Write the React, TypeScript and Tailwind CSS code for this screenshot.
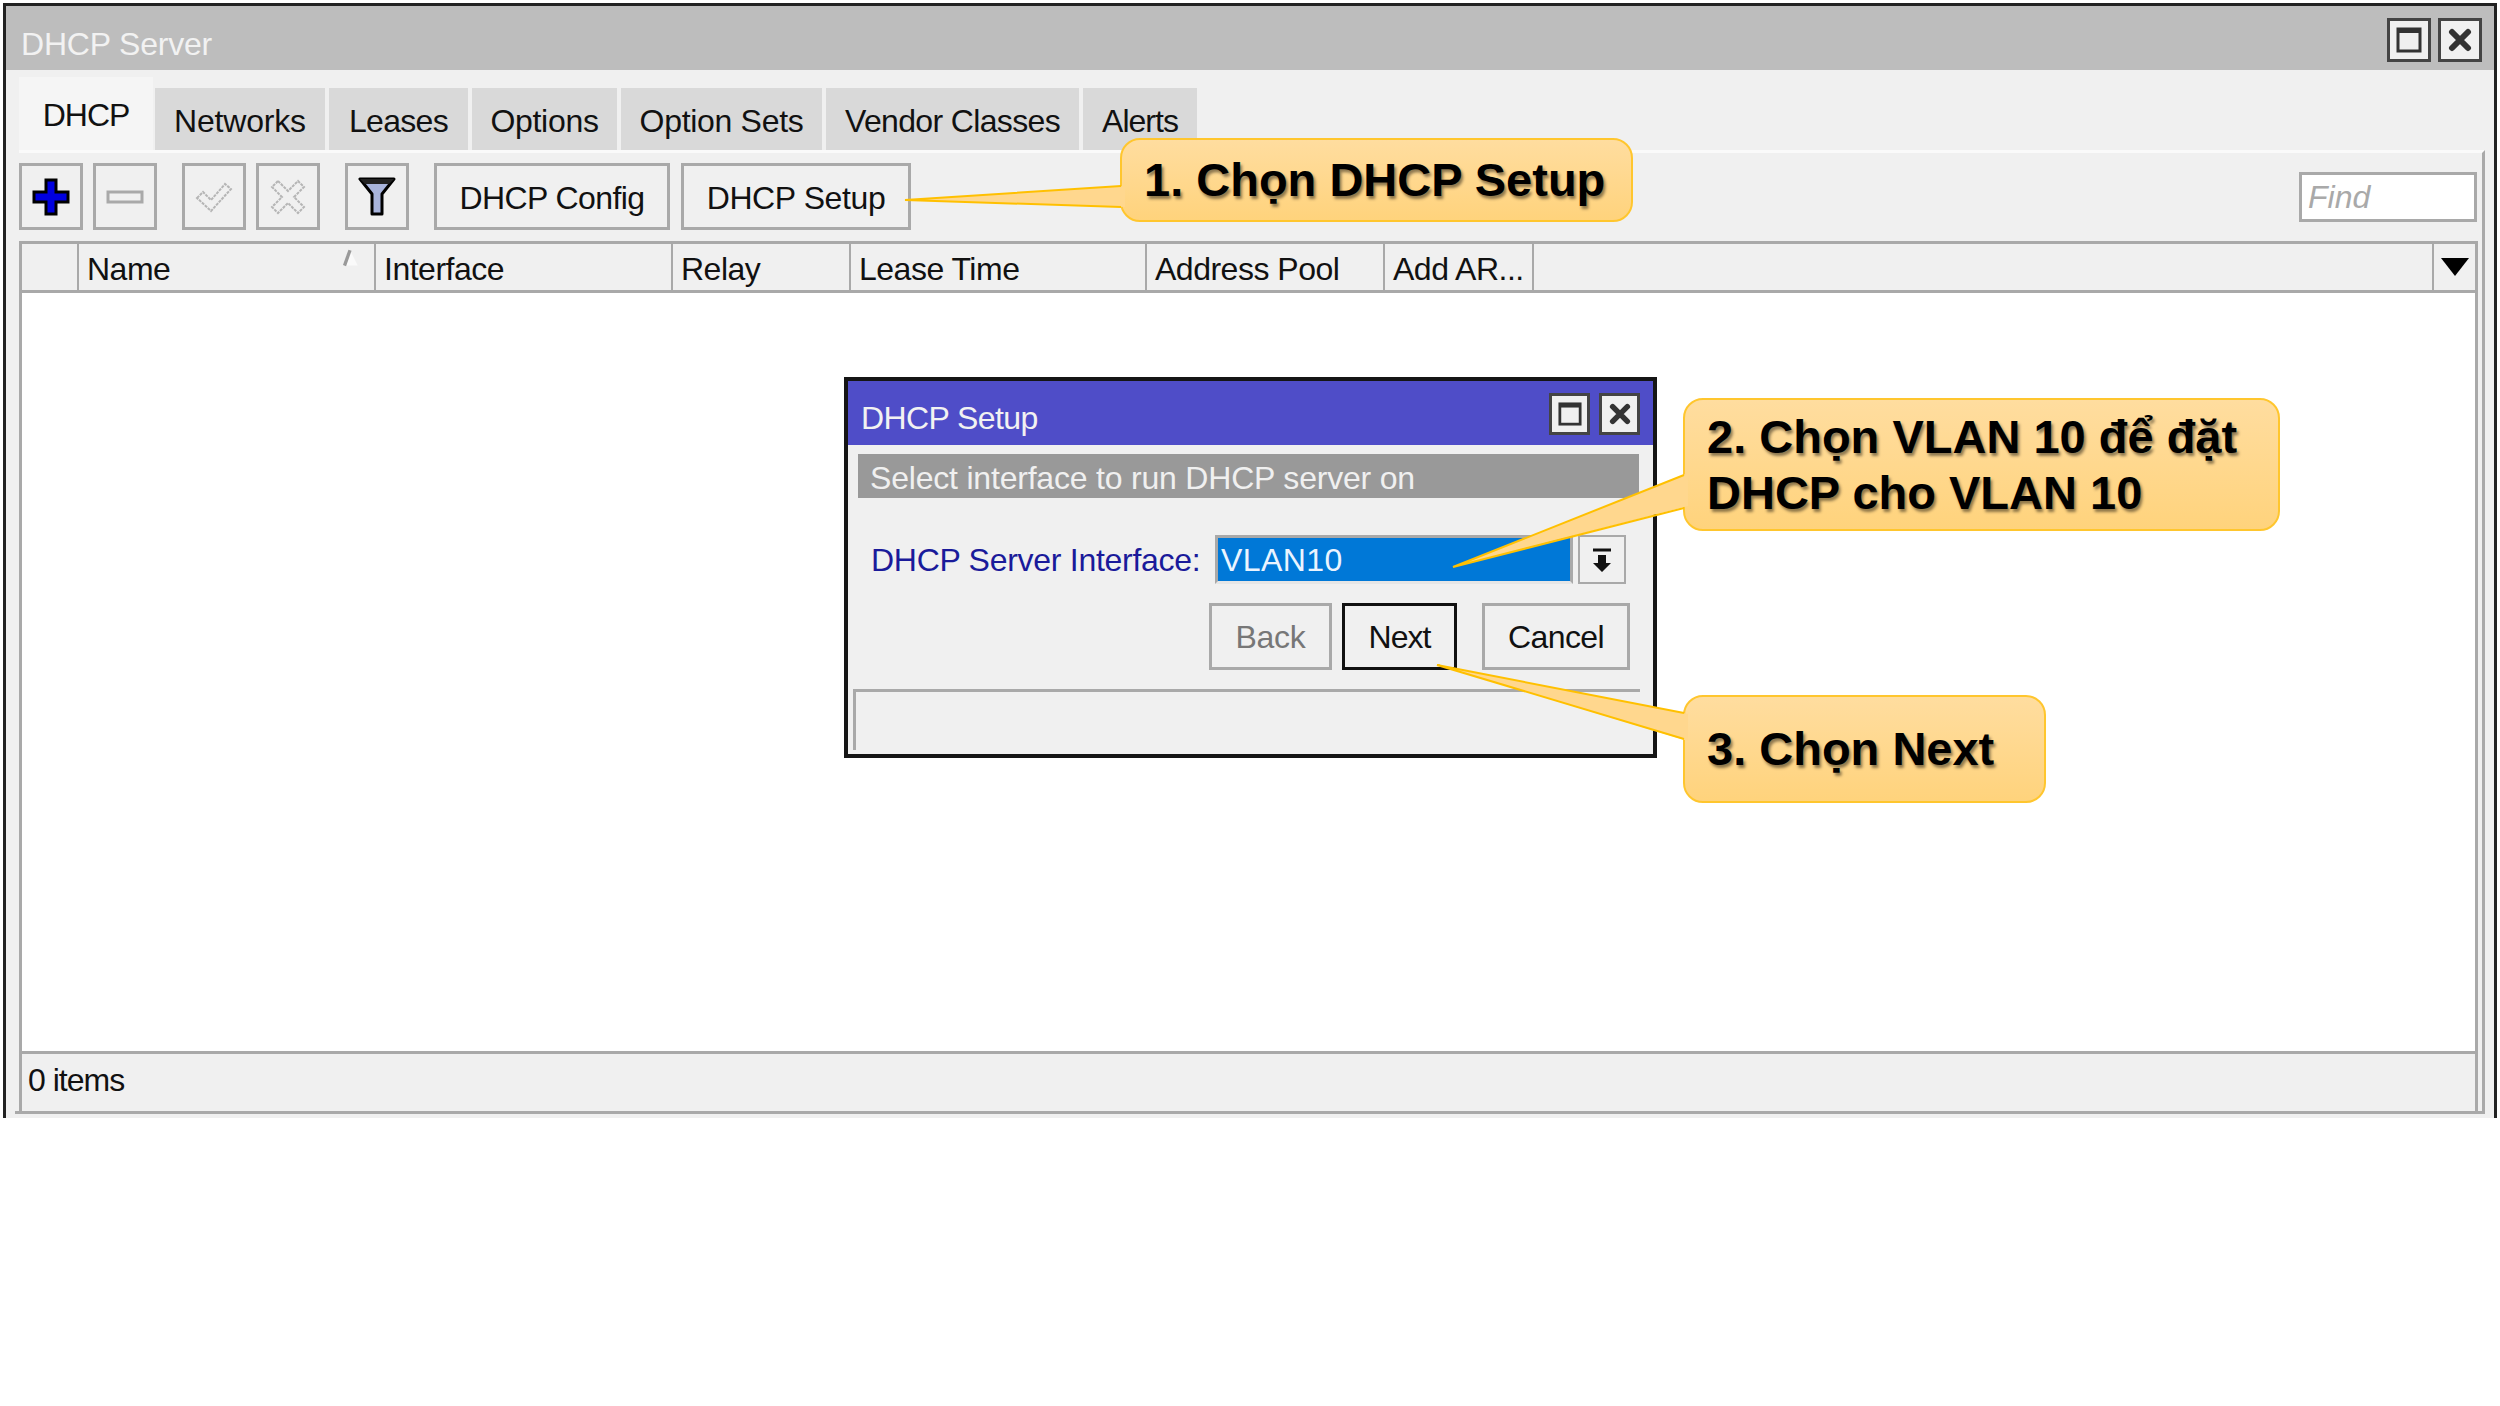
import React from 'react'

const ui = "font-['Liberation_Sans',Arial,sans-serif]"

const tabs = [
  { label: 'Networks', w: 'w-[170px]', track: 'tracking-[-0.2px]' },
  { label: 'Leases', w: 'w-[139px]', track: 'tracking-[-0.7px]' },
  { label: 'Options', w: 'w-[145px]', track: 'tracking-[-0.3px]' },
  { label: 'Option Sets', w: 'w-[201px]', track: 'tracking-[-0.3px]' },
  { label: 'Vendor Classes', w: 'w-[253px]', track: 'tracking-[-0.65px]' },
  { label: 'Alerts', w: 'w-[114px]', track: 'tracking-[-1px]' },
]

const columns = [
  { label: '', w: 'w-[57px]' },
  { label: 'Name', w: 'w-[297px]' },
  { label: 'Interface', w: 'w-[297px]' },
  { label: 'Relay', w: 'w-[178px]' },
  { label: 'Lease Time', w: 'w-[296px]' },
  { label: 'Address Pool', w: 'w-[238px]' },
  { label: 'Add AR...', w: 'w-[149px]' },
]

const ToolButton = ({ children, className = '' }: { children: React.ReactNode; className?: string }) => (
  <div className={`h-[67px] flex items-center justify-center border-[3px] border-[#a9a9a9] bg-[#f0f0f0] text-[32px] text-[#111] ${className}`}>
    {children}
  </div>
)

const MaxIcon = ({ size = 26 }: { size?: number }) => (
  <svg width={size} height={size} viewBox="0 0 26 26">
    <rect x="2" y="2" width="22" height="22" fill="#f0f0f0" stroke="#333" strokeWidth="3" />
    <rect x="2" y="2" width="22" height="4" fill="#333" />
  </svg>
)

const CloseIcon = ({ size = 24 }: { size?: number }) => (
  <svg width={size} height={size} viewBox="0 0 24 24">
    <path d="M4 4 L20 20 M20 4 L4 20" stroke="#333" strokeWidth="6" strokeLinecap="round" />
  </svg>
)

const WinButton = ({ children, className = '' }: { children: React.ReactNode; className?: string }) => (
  <div className={`flex items-center justify-center border-[3px] border-[#444] bg-[#f0f0f0] ${className}`}>{children}</div>
)

const Callout = ({ className, text }: { className: string; text: React.ReactNode }) => (
  <div
    className={`absolute flex items-center rounded-[20px] border-2 border-[#ffc62e] bg-gradient-to-b from-[#ffdd9f] to-[#ffd37c] pl-[22px] font-['Liberation_Sans',Arial,sans-serif] text-[47px] leading-[56px] font-bold text-black [text-shadow:2px_3px_3px_rgba(0,0,0,0.45)] ${className}`}
  >
    {text}
  </div>
)

export default function App() {
  return (
    <div className={`relative w-[2500px] h-[1406px] bg-white overflow-hidden ${ui}`}>
      <div className="ml-[3px] mt-[3px] w-[2494px] h-[1115px] border-x-[3px] border-t-[3px] border-[#222] bg-[#f0f0f0] flex flex-col">
        {/* title bar */}
        <div className="h-[64px] shrink-0 bg-[#bdbdbd] flex items-center justify-between pl-[15px] pr-[12px]">
          <span className="text-[32px] text-[#f2f2f2] tracking-[-0.2px] mt-[12px]">DHCP Server</span>
          <div className="flex gap-[7px] mt-[4px]">
            <WinButton className="w-[44px] h-[44px]"><MaxIcon /></WinButton>
            <WinButton className="w-[44px] h-[44px]"><CloseIcon /></WinButton>
          </div>
        </div>

        {/* tabs */}
        <div className="h-[80px] shrink-0 flex items-end pl-[13px]">
          <div className="w-[134px] h-[73px] bg-[#f5f5f5] flex items-center justify-center text-[32px] text-[#111] tracking-[-1px] pt-[2px]">DHCP</div>
          <div className="flex gap-[4px] ml-[2px]">
            {tabs.map(t => (
              <div key={t.label} className={`h-[62px] bg-[#d9d9d9] flex items-center justify-center pt-[3px] text-[32px] text-[#111] ${t.w} ${t.track}`}>
                {t.label}
              </div>
            ))}
          </div>
        </div>

        {/* content */}
        <div className="flex-1 flex flex-col ml-[13px] mr-[9px] mb-[4px] border-r-[3px] border-t-[3px] border-t-[#fafafa] border-r-[#a9a9a9] pr-[4px]">
          <div className="h-[88px] shrink-0 flex items-start pt-[10px]">
            <ToolButton className="w-[64px]">
              <svg width="38" height="38" viewBox="0 0 38 38">
                <path d="M14 2h10v12h12v10H24v12H14V24H2V14h12z" fill="#0000e0" stroke="#000" strokeWidth="3" />
              </svg>
            </ToolButton>
            <ToolButton className="w-[64px] ml-[10px]">
              <svg width="38" height="14" viewBox="0 0 38 14">
                <rect x="2" y="2" width="34" height="10" fill="#f0f0f0" stroke="#a9a9a9" strokeWidth="3" />
              </svg>
            </ToolButton>
            <ToolButton className="w-[64px] ml-[25px]">
              <svg width="38" height="34" viewBox="0 0 38 34">
                <path d="M2 18l6-6 8 8L30 4l6 5-20 22z" fill="none" stroke="#b5b5b5" strokeWidth="2" strokeDasharray="3 1" />
              </svg>
            </ToolButton>
            <ToolButton className="w-[64px] ml-[10px]">
              <svg width="36" height="36" viewBox="0 0 36 36">
                <path d="M8 2l10 10L28 2l6 6-10 10 10 10-6 6-10-10L8 34l-6-6 10-10L2 8z" fill="none" stroke="#b5b5b5" strokeWidth="2" strokeDasharray="3 1" />
              </svg>
            </ToolButton>
            <ToolButton className="w-[64px] ml-[25px]">
              <svg width="38" height="42" viewBox="0 0 38 42">
                <path d="M2 3h34L24 18v20h-10V18z" fill="#a8b4dc" stroke="#000" strokeWidth="3" strokeLinejoin="round" />
                <path d="M2 3h34l-5 5H7z" fill="#222" />
              </svg>
            </ToolButton>
            <ToolButton className="w-[236px] ml-[25px] pt-[2px] tracking-[-0.6px]">DHCP Config</ToolButton>
            <ToolButton className="w-[230px] ml-[11px] pt-[2px] tracking-[-0.4px]">DHCP Setup</ToolButton>
            <div className="ml-auto mt-[9px] w-[178px] h-[50px] border-[3px] border-[#a9a9a9] bg-white flex items-center pl-[6px] mr-[1px]">
              <span className="text-[32px] italic text-[#a9a9a9]">Find</span>
            </div>
          </div>

          {/* table */}
          <div className="flex-1 flex flex-col border-x-[3px] border-[#a9a9a9]">
            <div className="h-[52px] shrink-0 flex border-y-[3px] border-[#a9a9a9] bg-[#f0f0f0]">
              {columns.map((c, i) => (
                <div key={i} className={`relative shrink-0 border-r-[2px] border-[#a9a9a9] pl-[8px] pt-[3px] flex items-center text-[32px] text-[#111] tracking-[-0.5px] ${c.w}`}>
                  {c.label}
                  {c.label === 'Name' && (
                    <svg className="absolute right-[14px] top-[4px]" width="20" height="22" viewBox="0 0 18 20">
                      <path d="M9 2L16 16H3z" fill="#fafafa" />
                      <path d="M9 2L4 16" stroke="#999" strokeWidth="3" />
                    </svg>
                  )}
                </div>
              ))}
              <div className="flex-1 border-r-[2px] border-[#a9a9a9]" />
              <div className="w-[41px] shrink-0 flex items-center justify-center">
                <svg width="28" height="18" viewBox="0 0 28 18"><path d="M0 0h28L14 18z" fill="#000" /></svg>
              </div>
            </div>
            <div className="flex-1 bg-white" />
            <div className="h-[63px] shrink-0 border-t-[3px] border-[#a9a9a9] flex items-center pl-[6px] pb-[8px] text-[32px] text-[#111] tracking-[-1px]">
              0 items
            </div>
          </div>
        </div>
      </div>
      <div className="ml-[15px] w-[2468px] h-[3px] -mt-[7px] bg-[#a9a9a9] relative" />

      {/* dialog window */}
      <div className="absolute left-[844px] top-[377px] w-[813px] h-[381px] border-[4px] border-[#151515] bg-[#f0f0f0] flex flex-col">
        <div className="h-[64px] shrink-0 bg-[#4f4dc8] flex items-center justify-between pl-[13px] pr-[13px]">
          <span className="text-[32px] text-[#f2f2f2] tracking-[-0.6px] mt-[10px]">DHCP Setup</span>
          <div className="flex gap-[9px] mt-[2px]">
            <WinButton className="w-[41px] h-[42px]"><MaxIcon size={24} /></WinButton>
            <WinButton className="w-[41px] h-[42px]"><CloseIcon size={22} /></WinButton>
          </div>
        </div>
        <div className="mt-[9px] ml-[10px] mr-[14px] h-[44px] shrink-0 bg-[#999] flex items-center pl-[12px] pt-[4px] text-[32px] text-[#f0f0f0] tracking-[-0.2px]">
          Select interface to run DHCP server on
        </div>
        <div className="mt-[37px] flex items-center h-[49px] shrink-0 pl-[23px]">
          <span className="w-[344px] text-[32px] text-[#1a1a9a] tracking-[-0.28px]">DHCP Server Interface:</span>
          <div className="w-[358px] h-[49px] border-[3px] border-[#a9a9a9] bg-[#0078d7] border-b-[#e6e6e6] flex items-center pl-[3px] text-[32px] text-[#eaf4ff] tracking-[0.4px]">
            VLAN10
          </div>
          <div className="w-[48px] h-[49px] ml-[5px] border-[2px] border-[#a9a9a9] flex items-center justify-center">
            <svg width="22" height="26" viewBox="0 0 22 26">
              <path d="M2 3h18" stroke="#111" strokeWidth="3" />
              <path d="M7 8h8v8h5L11 25 2 16h5z" fill="#111" />
            </svg>
          </div>
        </div>
        <div className="mt-[19px] flex h-[67px] shrink-0 pl-[361px]">
          <ToolButton className="w-[123px] text-[#777]! tracking-[-0.3px]">Back</ToolButton>
          <div className="w-[115px] h-[67px] ml-[10px] border-[3px] border-[#111] flex items-center justify-center text-[32px] text-[#111] tracking-[-1px]">Next</div>
          <ToolButton className="w-[148px] ml-[25px] tracking-[-0.6px]">Cancel</ToolButton>
        </div>
        <div className="mt-[19px] ml-[5px] mr-[13px] flex-1 border-t-[3px] border-l-[3px] border-[#a9a9a9] mb-[4px]" />
      </div>

      {/* callouts */}
      <Callout className="left-[1120px] top-[138px] w-[513px] h-[84px]" text="1. Chọn DHCP Setup" />
      <Callout
        className="left-[1683px] top-[398px] w-[597px] h-[133px]"
        text={<span>2. Chọn VLAN 10 để đặt<br />DHCP cho VLAN 10</span>}
      />
      <Callout className="left-[1683px] top-[695px] w-[363px] h-[108px]" text="3. Chọn Next" />

      {/* callout tails */}
      <svg className="absolute left-0 top-0 pointer-events-none" width="2500" height="1406" viewBox="0 0 2500 1406">
        <g fill="#ffd78e" stroke="none">
          <polygon points="905,200 1125,186 1125,207" />
          <polygon points="1453,567 1688,473 1688,506" />
          <polygon points="1437,665 1688,714 1688,741" />
        </g>
        <g fill="none" stroke="#ffc000" strokeWidth="2">
          <polyline points="1121,186 905,200 1121,207" />
          <polyline points="1684,475 1453,567 1684,508" />
          <polyline points="1684,713 1437,665 1684,739" />
        </g>
      </svg>
    </div>
  )
}
